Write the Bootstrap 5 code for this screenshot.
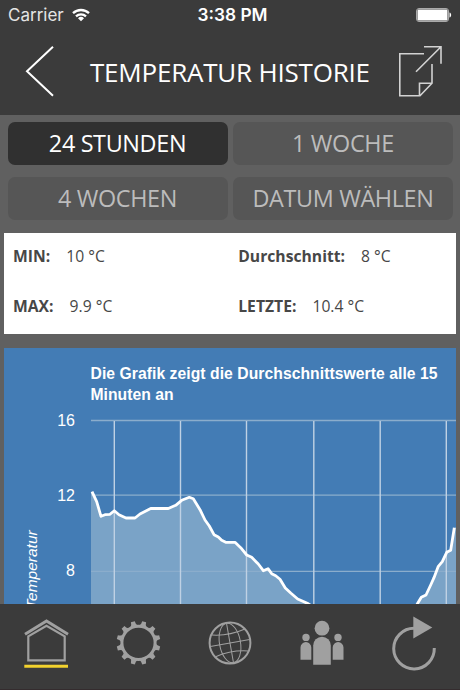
<!DOCTYPE html>
<html lang="de">
<head>
<meta charset="utf-8">
<meta name="viewport" content="width=device-width, initial-scale=1">
<title>Temperatur Historie</title>
<link href="https://cdn.jsdelivr.net/npm/bootstrap@5.3.0/dist/css/bootstrap.min.css" rel="stylesheet">
<style>
body{background:#606060;font-family:"Open Sans","Noto Sans",sans-serif;height:690px}
.app-head{background:#3b3b3b;height:115px}
.status{height:30px;font-family:Inter,sans-serif;font-size:17px;line-height:30px;color:#fff}
.carrier{color:#e4e4e4;font-size:17px}
.clock{font-weight:600;font-size:17.3px;padding-left:5px}
.title{font-size:26px;font-weight:400;letter-spacing:-.21px;line-height:36px;color:#fff;white-space:nowrap}
.title-row{height:85px}
.range-grid{padding:7px 7px 0 7.5px;row-gap:12px;column-gap:5.5px;display:grid;grid-template-columns:220px 220px}
.range-grid .btn{height:43px;padding:0;border:0;border-radius:7px;background:#565656;color:#bcbcbc;font-size:23.4px;letter-spacing:-.35px;line-height:43px;white-space:nowrap}
.range-grid .btn.active{background:#303030;color:#fff}
.stats{margin:13px 4.5px 0 4px;height:101px;background:#fff;color:#474747;font-size:15.7px;line-height:22px}
.stats .row{padding-left:1px;height:50px}
.plot{margin:14px 4.5px 0 4px;height:257px;background:#437cb5}
.plot text{font-family:"Liberation Sans",Arial,sans-serif;fill:#fff}
.tabs{background:#3b3b3b;height:86px;border-bottom:1px solid #342c2e}
.tabs a{width:92px}
svg{display:block}
</style>
<script src="https://cdn.jsdelivr.net/npm/bootstrap@5.3.0/dist/js/bootstrap.bundle.min.js"></script>
</head>
<body class="d-flex flex-column overflow-hidden">
<header class="app-head flex-shrink-0">
  <div class="status row g-0">
    <div class="col-4 d-flex align-items-center ps-2">
      <span class="carrier">Carrier</span>
      <svg class="ms-2" width="18" height="14" viewBox="0 0 18 14" fill="none" stroke="#fff" stroke-width="2.3"><path d="M1 5.2a11.6 11.6 0 0 1 16 0M4 8.3a7.3 7.3 0 0 1 10 0"/><path d="M6 10.3a4.3 4.3 0 0 1 6 0L9 13.3z" fill="#fff" stroke="none"/></svg>
    </div>
    <div class="col-4 text-center"><span class="clock">3:38 PM</span></div>
    <div class="col-4 d-flex align-items-center justify-content-end pe-2">
      <svg width="36" height="14" viewBox="0 0 36 14"><rect x=".5" y=".5" width="32" height="13" rx="2.5" fill="none" stroke="#aaa"/><rect x="1.5" y="1.5" width="30" height="11" rx="1.2" fill="#fff"/><path d="M33.5 4.5c2.2.6 2.2 4.4 0 5z" fill="#fff"/></svg>
    </div>
  </div>
  <div class="title-row d-flex">
    <svg class="flex-shrink-0" width="90" height="85" viewBox="0 30 90 85" fill="none" stroke="#fff" stroke-width="2"><path d="M53 46.8 27 71.2l26 24.6"/></svg>
    <h1 class="title m-0 pt-4">TEMPERATUR HISTORIE</h1>
    <svg class="flex-shrink-0 ms-auto" width="70" height="85" viewBox="390 30 70 85" fill="none" stroke="#d2d2d2" stroke-width="1.6"><path d="M424 53.7H399.8V95.7H420L432 83.3V64M419.5 95.7V83.3H432M416 71.8 441 46.8M424 46.8h17v17"/></svg>
  </div>
</header>
<main class="flex-grow-1 overflow-hidden">
  <div class="range-grid">
    <button class="btn active">24 STUNDEN</button>
    <button class="btn">1 WOCHE</button>
    <button class="btn">4 WOCHEN</button>
    <button class="btn">DATUM WÄHLEN</button>
  </div>
  <section class="stats">
    <div class="row g-0">
      <div class="col-6 d-flex gap-3 ps-2 pt-2"><b class="mt-1">MIN:</b><span class="mt-1">10 °C</span></div>
      <div class="col-6 d-flex gap-3 ps-2 pt-2"><b class="mt-1">Durchschnitt:</b><span class="mt-1">8 °C</span></div>
    </div>
    <div class="row g-0">
      <div class="col-6 d-flex gap-3 ps-2 pt-2"><b class="mt-1">MAX:</b><span class="mt-1">9.9 °C</span></div>
      <div class="col-6 d-flex gap-3 ps-2 pt-2"><b class="mt-1">LETZTE:</b><span class="mt-1">10.4 °C</span></div>
    </div>
  </section>
  <section class="plot">
    <svg width="451.5" height="257" viewBox="4 348 451.5 257">
      <path d="M92 491.7 96.7 501.7 101 516.3 105 514.7 110 514.3 114.3 510.7 119 514.7 126 518H135L140 514 150.7 508.5H168.3L175.7 505.3 181.7 500.3 189.3 497.3 193.3 498.7 200 509.7 205 520 209.3 526 214 534.7 218.3 537 221.7 540.3 225.7 542.3H235L240.7 547.7 246.7 555 251.7 557.3 258.3 564 263.3 570.7 268 568.7 271.7 573.7 275.7 575.7 280 579.3 285.3 588 291 593.3 297.7 599 307.3 603.3 315 608H415L417.7 603.3 421.3 597.3 426 595 430.7 585 434 577.7 438.3 566.3 442.3 561.7 446.7 552.3 450.7 550.3 454.3 527.7 456 527V612H91V491.7z" fill="#7aa3c7"/>
      <path d="M91 420.5H456M91 495.2H456M91 571.4H456" stroke="#8badcc" stroke-width="1.3"/>
      <path d="M114.3 421V605M180.5 421V605M246.5 421V605M313.8 421V605M380.2 421V605M446.3 421V605" stroke="#bfd1e4" stroke-width="1.4"/>
      <path d="M92 491.7 96.7 501.7 101 516.3 105 514.7 110 514.3 114.3 510.7 119 514.7 126 518H135L140 514 150.7 508.5H168.3L175.7 505.3 181.7 500.3 189.3 497.3 193.3 498.7 200 509.7 205 520 209.3 526 214 534.7 218.3 537 221.7 540.3 225.7 542.3H235L240.7 547.7 246.7 555 251.7 557.3 258.3 564 263.3 570.7 268 568.7 271.7 573.7 275.7 575.7 280 579.3 285.3 588 291 593.3 297.7 599 307.3 603.3 315 608M415 608 417.7 603.3 421.3 597.3 426 595 430.7 585 434 577.7 438.3 566.3 442.3 561.7 446.7 552.3 450.7 550.3 454.3 527.7" fill="none" stroke="#fff" stroke-width="2.8" stroke-linejoin="round"/>
      <g font-size="15.7" font-weight="700"><text x="90.5" y="379.3" textLength="347">Die Grafik zeigt die Durchschnittswerte alle 15</text><text x="90.5" y="399.5" textLength="83">Minuten an</text></g>
      <g font-size="16" text-anchor="end"><text x="75" y="426.3">16</text><text x="75" y="501.2">12</text><text x="75" y="576.4">8</text></g>
      <text transform="translate(36.5 609) rotate(-90)" font-size="15.5" font-style="italic">Temperatur</text>
    </svg>
  </section>
</main>
<nav class="tabs d-flex flex-shrink-0">
  <a href="#"><svg width="92" height="85" viewBox="0 604 92 85" fill="none" stroke="#a0a0a0"><path d="M25 634.2 46.5 621 68 634.2" stroke-width="2.9"/><path d="M28.3 660.3V636.3L46.5 625.8 64.7 636.3V660.3z" stroke-width="2.2"/><path d="M24.3 666.3H68" stroke="#f2d22e" stroke-width="3"/></svg></a>
  <a href="#"><svg width="92" height="85" viewBox="92 604 92 85" fill="none" stroke="#a0a0a0"><circle cx="138.5" cy="642.8" r="16.6" stroke-width="3"/><g id="teeth" fill="#a0a0a0" stroke="none"></g></svg></a>
  <a href="#"><svg width="92" height="85" viewBox="184 604 92 85" fill="none" stroke="#a0a0a0" stroke-width="1"><circle cx="230" cy="643" r="20.4" stroke-width="2"/><g transform="rotate(-10 230 643)"><path d="M230 623V663M210 643H250M213.5 632Q230 636 246.5 632M213.5 654Q230 650 246.5 654"/><ellipse cx="230" cy="643" rx="10.5" ry="20"/></g></svg></a>
  <a href="#"><svg width="92" height="85" viewBox="276 604 92 85" fill="#a0a0a0"><circle cx="322" cy="628.2" r="7.4"/><path d="M313.2 664.7V645.5a8.8 8.8 0 0 1 17.6 0V664.7z"/><circle cx="306" cy="637.4" r="3.7"/><path d="M300.5 659.7V647.5a5.4 5.4 0 0 1 10.8 0V659.7zM332.7 659.7V647.5a5.4 5.4 0 0 1 10.8 0V659.7z"/><circle cx="338" cy="637.4" r="3.7"/></svg></a>
  <a href="#"><svg width="92" height="85" viewBox="368 604 92 85" fill="none" stroke="#a0a0a0" stroke-width="3"><path d="M434.3 648A20.3 20.3 0 1 1 414 628.3"/><path d="M413.3 616.5 432.3 627.5 413.3 638.5z" fill="#a0a0a0" stroke="none"/></svg></a>
</nav>
<script>
// Twelve evenly spaced teeth around the settings wheel
document.getElementById('teeth').innerHTML = Array.from({length:12}, (_, i) =>
  `<path d="M134.5 626Q136.6 624.5 136.5 620.9H140.5Q140.4 624.5 142.5 626z" transform="rotate(${15 + i*30} 138.5 642.8)"/>`).join('');
</script>
</body>
</html>
